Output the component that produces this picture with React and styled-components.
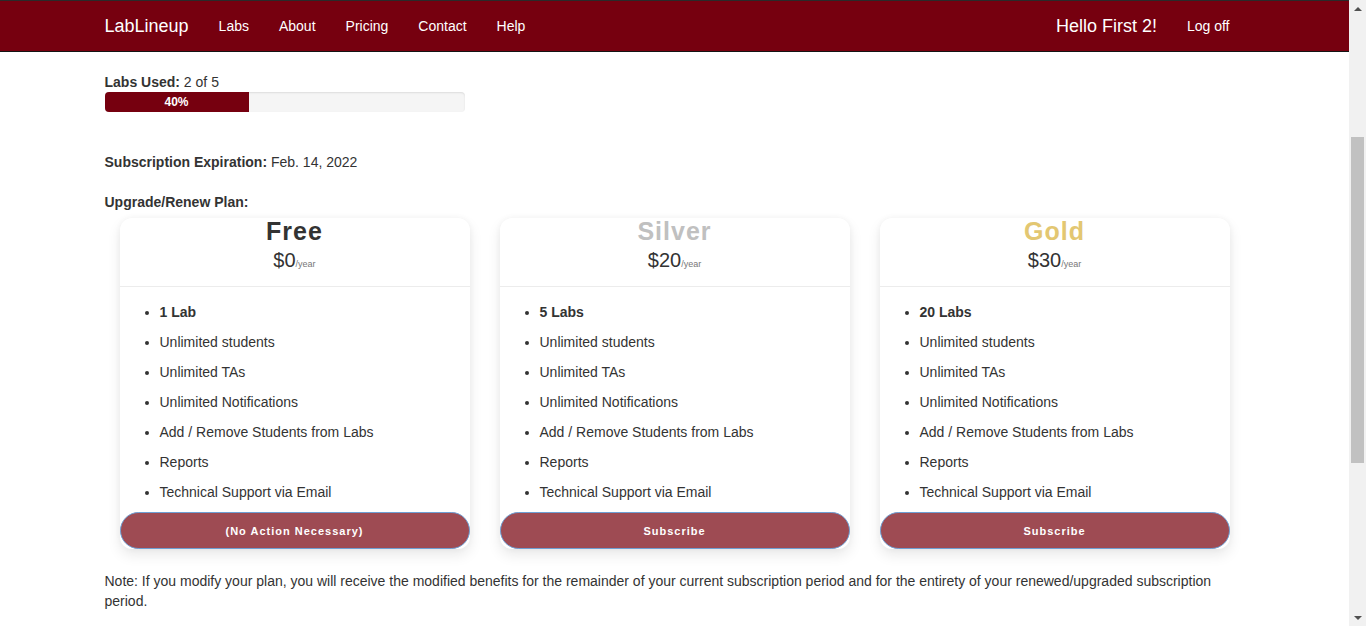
import React from "react";
import styled, { createGlobalStyle } from "styled-components";

const Global = createGlobalStyle`
  html, body { height: 100%; }
  body {
    margin: 0;
    font-family: "Liberation Sans", Arial, sans-serif;
    font-size: 14px;
    line-height: 20px;
    color: #333;
    background: #fff;
    overflow: hidden;
  }
  #root { height: 100%; }
  * { box-sizing: border-box; }
`;

const Frame = styled.div`
  display: flex;
  height: 100vh;
`;

const Page = styled.div`
  flex: 1;
  min-width: 0;
  overflow-y: auto;
  scrollbar-width: none;
  &::-webkit-scrollbar { display: none; }
`;

const Rail = styled.div`
  width: 17px;
  flex: none;
  background: #f1f1f1;
  display: flex;
  flex-direction: column;
`;

const RailArrow = styled.div`
  height: 17px;
  display: flex;
  align-items: center;
  justify-content: center;
  &::before {
    content: "";
    width: 0;
    height: 0;
    border-left: 4px solid transparent;
    border-right: 4px solid transparent;
    ${(p) => (p.$down ? "border-top: 4px solid #505050;" : "border-bottom: 4px solid #505050;")}
  }
`;

const RailTrack = styled.div`
  flex: 1;
  padding: 120px 2px 0;
`;

const RailThumb = styled.div`
  height: 326px;
  background: #c1c1c1;
`;

const NavBar = styled.nav`
  background: #76000f;
  border-top: 1px solid #2a2a2a;
  border-bottom: 1px solid #141414;
  height: 52px;
  margin-bottom: 20px;
`;

const Container = styled.div`
  width: 1170px;
  margin: 0 auto;
  padding: 0 15px;
`;

const NavInner = styled(Container)`
  display: flex;
  align-items: center;
  height: 50px;
`;

const Brand = styled.a`
  color: #fff;
  font-size: 18px;
  line-height: 20px;
  padding: 15px 15px 15px 0;
  text-decoration: none;
`;

const NavLink = styled.a`
  color: #fff;
  font-size: ${(p) => (p.$big ? "18px" : "14px")};
  line-height: 20px;
  padding: 15px;
  text-decoration: none;
`;

const Spacer = styled.div`
  flex: 1;
`;

const Line = styled.div`
  line-height: 20px;
  margin-top: ${(p) => p.$mt || 0}px;
  b { font-weight: bold; }
`;

const Progress = styled.div`
  width: 360px;
  height: 20px;
  background: #f5f5f5;
  border-radius: 4px;
  box-shadow: inset 0 1px 2px rgba(0, 0, 0, 0.1);
  overflow: hidden;
`;

const ProgressFill = styled.div`
  height: 100%;
  background: #76000f;
  color: #fff;
  font-size: 12px;
  font-weight: bold;
  line-height: 20px;
  text-align: center;
`;

const Cards = styled.div`
  display: grid;
  grid-template-columns: repeat(3, 350px);
  gap: 30px;
  padding: 0 15px;
  margin-top: 6px;
`;

const Card = styled.div`
  background: #fff;
  border-radius: 12px;
  box-shadow: 0 6px 14px rgba(0, 0, 0, 0.09), 0 0 6px rgba(0, 0, 0, 0.04);
  display: flex;
  flex-direction: column;
`;

const CardHead = styled.div`
  text-align: center;
  padding-bottom: 8px;
  border-bottom: 1px solid #ececec;
`;

const PlanName = styled.div`
  font-size: 25px;
  line-height: 26px;
  font-weight: bold;
  letter-spacing: 1px;
  color: ${(p) => p.$color};
`;

const Price = styled.div`
  font-size: 20px;
  line-height: 28px;
  padding-top: 2px;
  color: #333;
  small {
    font-size: 9px;
    color: #777;
    letter-spacing: 0;
  }
`;

const Features = styled.ul`
  margin: 10px 0 5px;
  padding: 0 0 0 40px;
  list-style: disc;
`;

const Feature = styled.li`
  line-height: 20px;
  padding: 5px 0;
  font-weight: ${(p) => (p.$bold ? "bold" : "normal")};
`;

const PlanButton = styled.button`
  width: 100%;
  height: 37px;
  border-radius: 19px;
  background: #9e4b53;
  border: 1px solid #6e9fd3;
  color: #fff;
  font-family: "Liberation Sans", Arial, sans-serif;
  font-size: 11px;
  font-weight: bold;
  letter-spacing: 1px;
  cursor: pointer;
`;

const Note = styled.p`
  margin: 22px 0 0;
  line-height: 20px;
`;

const PageEnd = styled.div`
  height: 490px;
`;

const plans = [
  { name: "Free", color: "#333", price: 0, labs: "1 Lab", action: "(No Action Necessary)" },
  { name: "Silver", color: "#c0c0c0", price: 20, labs: "5 Labs", action: "Subscribe" },
  { name: "Gold", color: "#e3c772", price: 30, labs: "20 Labs", action: "Subscribe" },
];

const features = [
  "Unlimited students",
  "Unlimited TAs",
  "Unlimited Notifications",
  "Add / Remove Students from Labs",
  "Reports",
  "Technical Support via Email",
];

export default function App() {
  const used = 2;
  const total = 5;
  const pct = Math.round((used / total) * 100);
  return (
    <Frame>
      <Global />
      <Page>
        <NavBar>
          <NavInner>
            <Brand href="#">LabLineup</Brand>
            <NavLink href="#">Labs</NavLink>
            <NavLink href="#">About</NavLink>
            <NavLink href="#">Pricing</NavLink>
            <NavLink href="#">Contact</NavLink>
            <NavLink href="#">Help</NavLink>
            <Spacer />
            <NavLink href="#" $big>Hello First 2!</NavLink>
            <NavLink href="#">Log off</NavLink>
          </NavInner>
        </NavBar>
        <Container>
          <Line>
            <b>Labs Used:</b> {used} of {total}
          </Line>
          <Progress>
            <ProgressFill style={{ width: `${pct}%` }}>{pct}%</ProgressFill>
          </Progress>
          <Line $mt={40}>
            <b>Subscription Expiration:</b> Feb. 14, 2022
          </Line>
          <Line $mt={20}>
            <b>Upgrade/Renew Plan:</b>
          </Line>
          <Cards>
            {plans.map((p) => (
              <Card key={p.name}>
                <CardHead>
                  <PlanName $color={p.color}>{p.name}</PlanName>
                  <Price>
                    ${p.price}
                    <small>/year</small>
                  </Price>
                </CardHead>
                <Features>
                  <Feature $bold>{p.labs}</Feature>
                  {features.map((f) => (
                    <Feature key={f}>{f}</Feature>
                  ))}
                </Features>
                <PlanButton>{p.action}</PlanButton>
              </Card>
            ))}
          </Cards>
          <Note>
            Note: If you modify your plan, you will receive the modified benefits for the remainder of your current
            subscription period and for the entirety of your renewed/upgraded subscription period.
          </Note>
          <PageEnd />
        </Container>
      </Page>
      <Rail>
        <RailArrow />
        <RailTrack>
          <RailThumb />
        </RailTrack>
        <RailArrow $down />
      </Rail>
    </Frame>
  );
}
